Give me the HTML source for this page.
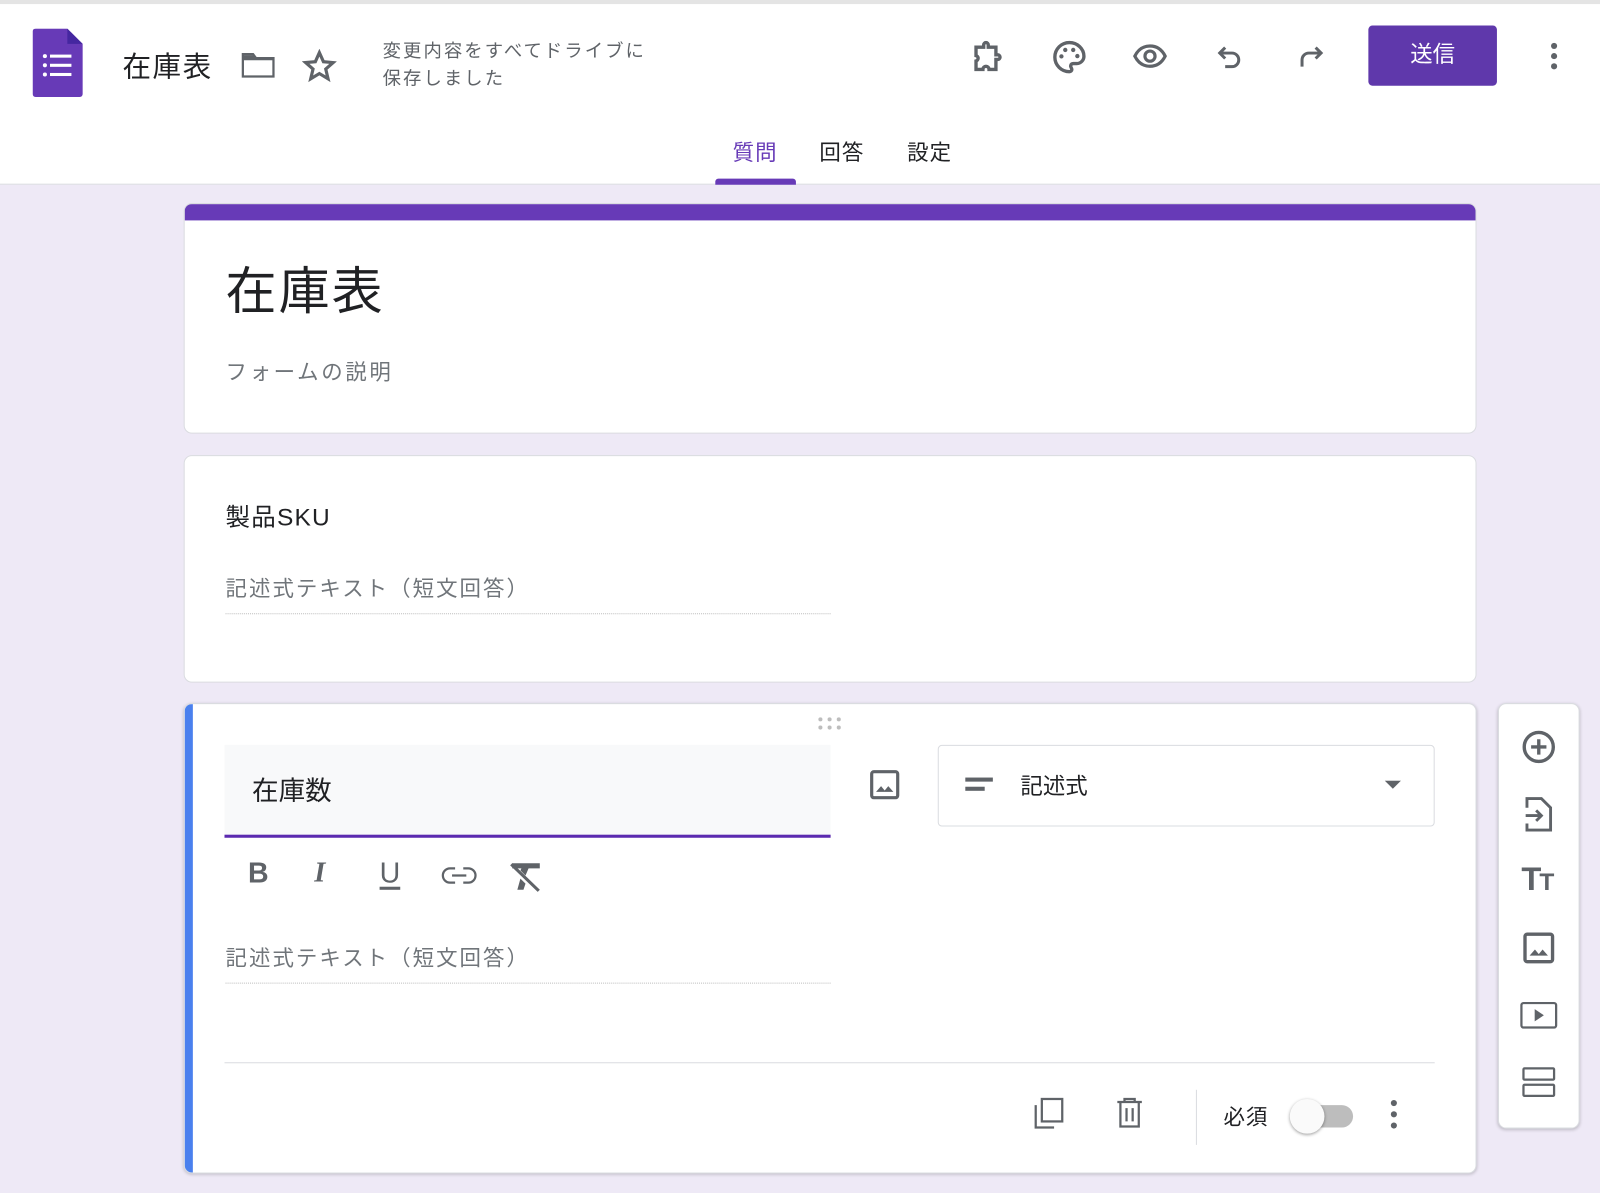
<!DOCTYPE html>
<html><head><meta charset="utf-8"><style>
*{box-sizing:border-box;margin:0;padding:0}
body{width:1600px;height:1192px;background:#eee9f6;font-family:"Liberation Sans","Noto Sans CJK JP",sans-serif;position:relative;overflow:hidden;color:#202124}
#w{position:absolute;left:0;top:0;width:1568px;height:1169px;transform:scale(1.020408);transform-origin:0 0}
.a{position:absolute;white-space:nowrap}
.hdr{left:0;top:0;width:1568px;height:181px;background:#fff;border-top:4px solid #e4e4e4;border-bottom:1px solid #dadce0}
.card{background:#fff;border-radius:8px;border:1px solid #dadce0}
svg{position:absolute}
.ic{fill:none;stroke:#5f6368;stroke-width:2.2}
.g{color:#70757a}
</style></head><body><div id="w">
<div class="a hdr"></div>
<svg style="left:32px;top:28px" width="50" height="68" viewBox="0 0 50 68"><path d="M3 0H34L49 15V64Q49 67 46 67H3Q0 67 0 64V3Q0 0 3 0Z" fill="#673ab7"/><path d="M34 0V15H49Z" fill="#4527a0"/><g fill="#fff"><circle cx="12" cy="27" r="2"/><circle cx="12" cy="36" r="2"/><circle cx="12" cy="45" r="2"/><rect x="17" y="25.5" width="21" height="3"/><rect x="17" y="34.5" width="21" height="3"/><rect x="17" y="43.5" width="21" height="3"/></g></svg>
<div class="a" style="left:120px;top:44px;font-size:28px;letter-spacing:1.5px">在庫表</div>
<svg style="left:236px;top:50px" width="34" height="28" viewBox="0 0 34 28"><path class="ic" d="M2 4V25H32V7H15L12 3H2Z" stroke-width="2.6"/><path d="M2 4H12L15 7H32V9H2Z" fill="#5f6368"/></svg>
<svg style="left:296px;top:48px" width="34" height="34" viewBox="0 0 24 24"><path class="ic" stroke-width="1.6" d="M12 2.5l2.8 6.3 6.7.6-5.1 4.5 1.6 6.7L12 17l-6 3.6 1.6-6.7-5.1-4.5 6.7-.6z"/></svg>
<div class="a" style="left:375px;top:37px;font-size:18px;line-height:27px;color:#5f6368;letter-spacing:2px">変更内容をすべてドライブに<br>保存しました</div>
<svg style="left:952px;top:38px" width="36" height="36" viewBox="0 0 24 24"><path class="ic" stroke-width="1.9" d="M3 5.5h5V4a1.5 1.5 0 0 1 3 0v1.5h5v5h1.2a1.5 1.5 0 0 1 0 3H16v6.5h-4.5a2 2 0 0 0-4 0H3v-5.5a1.8 1.8 0 0 0 0-3.5z"/></svg>
<svg style="left:1030px;top:38px" width="36" height="36" viewBox="0 0 24 24"><path class="ic" stroke-width="1.9" d="M12 2.5a9.5 9.5 0 0 0 0 19c1 0 1.6-.7 1.6-1.5 0-.9-.8-1.3-.8-2.2 0-1 .8-1.6 1.8-1.6h2.2a4.8 4.8 0 0 0 4.7-4.8c0-4.9-4.3-8.9-9.5-8.9z"/><g fill="#5f6368"><circle cx="6.8" cy="11.5" r="1.4"/><circle cx="9.3" cy="7.3" r="1.4"/><circle cx="14.5" cy="7.3" r="1.4"/><circle cx="17.2" cy="11.3" r="1.4"/></g></svg>
<svg style="left:1108px;top:38px" width="38" height="34" viewBox="0 0 24 24"><path class="ic" stroke-width="1.9" d="M1.5 12C4 7 8 5 12 5s8 2 10.5 7c-2.5 5-6.5 7-10.5 7S4 17 1.5 12z"/><circle class="ic" stroke-width="1.9" cx="12" cy="12" r="3.5"/></svg>
<svg style="left:1190px;top:40px" width="32" height="32" viewBox="0 0 24 24"><path class="ic" stroke-width="2.2" d="M8 5L4 9l4 4M4 9h9a5 5 0 0 1 0 10H8"/></svg>
<svg style="left:1268px;top:40px" width="32" height="32" viewBox="0 0 24 24"><path class="ic" stroke-width="2.2" d="M16 5l4 4-4 4M20 9h-9a5 5 0 0 0-5 5v5"/></svg>
<div class="a" style="left:1341px;top:25px;width:126px;height:59px;background:#5f38ab;border-radius:4px;color:#fff;font-size:22px;text-align:center;line-height:57px">送信</div>
<svg style="left:1512px;top:40px" width="22" height="32"><g fill="#5f6368"><circle cx="11" cy="5" r="3"/><circle cx="11" cy="15" r="3"/><circle cx="11" cy="25" r="3"/></g></svg>
<div class="a" style="left:718px;top:134px;font-size:21px;color:#673ab7;letter-spacing:1px">質問</div>
<div class="a" style="left:803px;top:134px;font-size:21px;letter-spacing:1px">回答</div>
<div class="a" style="left:889px;top:134px;font-size:21px;letter-spacing:1px">設定</div>
<div class="a" style="left:701px;top:175px;width:79px;height:6px;background:#673ab7;border-radius:3px 3px 0 0"></div>
<div class="a card" style="left:180px;top:199px;width:1267px;height:226px;overflow:hidden"><div style="height:16px;background:#673ab7"></div></div>
<div class="a" style="left:221px;top:246px;font-size:50px;letter-spacing:2px">在庫表</div>
<div class="a g" style="left:221px;top:349px;font-size:21px;letter-spacing:2.6px">フォームの説明</div>
<div class="a card" style="left:180px;top:446px;width:1267px;height:223px"></div>
<div class="a" style="left:221px;top:487px;font-size:24px;letter-spacing:1.2px">製品SKU</div>
<div class="a g" style="left:221px;top:561px;font-size:21px;letter-spacing:2px">記述式テキスト（短文回答）</div>
<div class="a" style="left:221px;top:601px;width:593px;border-top:1px dotted #bdbdbd"></div>
<div class="a card" style="left:180px;top:689px;width:1267px;height:461px;box-shadow:0 1px 3px rgba(0,0,0,.2);overflow:hidden"><div style="position:absolute;left:0;top:0;bottom:0;width:8px;background:#4a80ee"></div></div>
<svg style="left:800px;top:702px" width="28" height="14"><g fill="#bdbdbd"><circle cx="4" cy="3" r="2"/><circle cx="13" cy="3" r="2"/><circle cx="22" cy="3" r="2"/><circle cx="4" cy="11" r="2"/><circle cx="13" cy="11" r="2"/><circle cx="22" cy="11" r="2"/></g></svg>
<div class="a" style="left:220px;top:730px;width:594px;height:91px;background:#f8f9fa;border-bottom:3px solid #5b2ab0"></div>
<div class="a" style="left:247px;top:755px;font-size:26px">在庫数</div>
<svg style="left:850px;top:752px" width="34" height="34" viewBox="0 0 24 24"><rect class="ic" stroke-width="2" x="3" y="3" width="18" height="18" rx="1.5"/><path d="M6 17l3.5-4 2.5 3 2.5-3 3.5 4z" fill="#5f6368"/></svg>
<div class="a" style="left:919px;top:730px;width:487px;height:80px;border:1px solid #dadce0;border-radius:4px"></div>
<div class="a" style="left:946px;top:762px;width:27px;height:4px;background:#5f6368"></div>
<div class="a" style="left:946px;top:771px;width:19px;height:4px;background:#5f6368"></div>
<div class="a" style="left:1000px;top:753px;font-size:22px">記述式</div>
<svg style="left:1357px;top:765px" width="18" height="10"><path d="M0 0h16l-8 8z" fill="#5f6368"/></svg>
<div class="a" style="left:243px;top:840px;font-size:28px;font-weight:bold;color:#5f6368">B</div>
<div class="a" style="left:308px;top:840px;font-size:28px;font-weight:bold;font-style:italic;color:#5f6368;font-family:'Liberation Serif',serif">I</div>
<div class="a" style="left:372px;top:840px;font-size:28px;color:#5f6368;text-decoration:underline;text-decoration-thickness:3px;text-underline-offset:4px">U</div>
<svg style="left:432px;top:846px" width="36" height="24" viewBox="0 0 36 24"><path class="ic" stroke-width="3.2" d="M14 5H9a7 7 0 0 0 0 14h5M22 5h5a7 7 0 0 1 0 14h-5M11 12h14"/></svg>
<svg style="left:498px;top:843px" width="34" height="32" viewBox="0 0 34 32"><path fill="#5f6368" d="M4 3h27v5H20l-3 7-5-5 1-2H4z M12 18l-3 11h6l2-6z"/><path stroke="#5f6368" stroke-width="3" d="M3 4l27 26"/></svg>
<div class="a g" style="left:221px;top:923px;font-size:21px;letter-spacing:2px">記述式テキスト（短文回答）</div>
<div class="a" style="left:221px;top:963px;width:593px;border-top:1px dotted #bdbdbd"></div>
<div class="a" style="left:220px;top:1041px;width:1186px;border-top:1px solid #dadce0"></div>
<svg style="left:1012px;top:1075px" width="32" height="34" viewBox="0 0 32 34"><path class="ic" stroke-width="3" d="M3 8v22h18"/><rect class="ic" stroke-width="3" x="9" y="2" width="20" height="22"/></svg>
<svg style="left:1093px;top:1075px" width="28" height="32" viewBox="0 0 28 32"><path class="ic" stroke-width="3" d="M2 5h24M9 5V2h10v3M5 5v24h18V5M11 11v13M17 11v13"/></svg>
<div class="a" style="left:1172px;top:1068px;width:1px;height:54px;background:#dadce0"></div>
<div class="a" style="left:1199px;top:1079px;font-size:21px;letter-spacing:1px">必須</div>
<div class="a" style="left:1270px;top:1083px;width:56px;height:22px;border-radius:11px;background:#bdbdbd"></div>
<div class="a" style="left:1264px;top:1077px;width:34px;height:34px;border-radius:50%;background:#fafafa;box-shadow:0 1px 3px rgba(0,0,0,.4)"></div>
<svg style="left:1356px;top:1076px" width="20" height="32"><g fill="#5f6368"><circle cx="10" cy="5" r="3"/><circle cx="10" cy="16" r="3"/><circle cx="10" cy="27" r="3"/></g></svg>
<div class="a card" style="left:1468px;top:689px;width:80px;height:417px;box-shadow:0 1px 3px rgba(0,0,0,.2)"></div>
<svg style="left:1490px;top:714px" width="36" height="36" viewBox="0 0 24 24"><circle class="ic" stroke-width="1.8" cx="12" cy="12" r="9.5"/><path class="ic" stroke-width="2" d="M12 7v10M7 12h10"/></svg>
<svg style="left:1492px;top:780px" width="32" height="36" viewBox="0 0 24 28"><path class="ic" stroke-width="2.2" d="M3 9V2h11l7 7v17H3v-5"/><path class="ic" stroke-width="2.2" d="M2 15h12M10 11l4 4-4 4"/></svg>
<div class="a" style="left:1491px;top:843px;font-size:32px;font-weight:bold;color:#5f6368;letter-spacing:-2px">T<span style="font-size:24px">T</span></div>
<svg style="left:1490px;top:911px" width="36" height="36" viewBox="0 0 24 24"><rect class="ic" stroke-width="1.8" x="3" y="3" width="18" height="18" rx="1.5"/><path d="M6 17l3.5-4 2.5 3 2.5-3 3.5 4z" fill="#5f6368"/></svg>
<svg style="left:1489px;top:980px" width="38" height="30" viewBox="0 0 38 30"><rect class="ic" stroke-width="2.8" x="2" y="3" width="34" height="24" rx="2"/><path d="M15 9l9 6-9 6z" fill="#5f6368"/></svg>
<svg style="left:1490px;top:1045px" width="36" height="32" viewBox="0 0 36 32"><rect class="ic" stroke-width="2.8" x="3" y="2" width="30" height="11" rx="1"/><rect class="ic" stroke-width="2.8" x="3" y="18" width="30" height="11" rx="1"/></svg>
</div></body></html>
